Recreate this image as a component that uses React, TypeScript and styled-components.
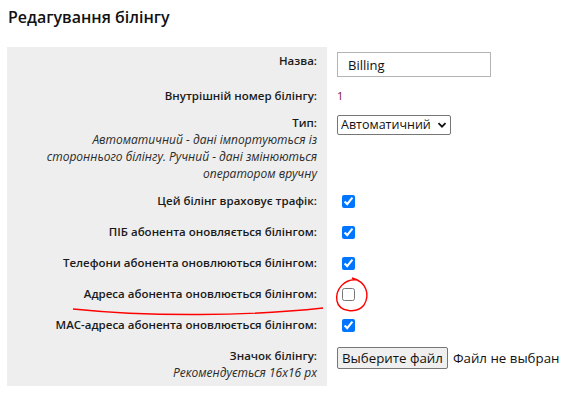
import React from 'react';
import styled, { createGlobalStyle } from 'styled-components';

const GlobalStyle = createGlobalStyle`
  body {
    margin: 0;
    background: #ffffff;
    font-family: "Open Sans", "Noto Sans", sans-serif;
    color: #1a1a1a;
  }
`;

const rows = [
  { label: 'Цей білінг враховує трафік:', checked: true },
  { label: 'ПІБ абонента оновляється білінгом:', checked: true },
  { label: 'Телефони абонента оновлюються білінгом:', checked: true },
  { label: 'Адреса абонента оновлюється білінгом:', checked: false },
  { label: 'MAC-адреса абонента оновлюється білінгом:', checked: true },
];

const App = () => {
  return (
    <Page>
      <GlobalStyle />
      <Title>Редагування білінгу</Title>
      <Table>
        <colgroup>
          <col style={{ width: 320 }} />
          <col />
        </colgroup>
        <tbody>
          <tr>
            <LabelCell>Назва:</LabelCell>
            <ValueCell>
              <TextInput defaultValue="Billing" />
            </ValueCell>
          </tr>
          <tr>
            <LabelCell>Внутрішній номер білінгу:</LabelCell>
            <ValueCell>
              <Number>1</Number>
            </ValueCell>
          </tr>
          <tr>
            <LabelCell>
              Тип:
              <Hint>
                Автоматичний - дані імпортуються із стороннього білінгу. Ручний - дані змінюються
                оператором вручну
              </Hint>
            </LabelCell>
            <ValueCell>
              <SelectBox>
                <Select defaultValue="auto">
                  <option value="auto">Автоматичний</option>
                  <option value="manual">Ручний</option>
                </Select>
                <Chevron width="10" height="10" viewBox="0 0 10 10">
                  <path d="M1.5 3.2 L5 6.7 L8.5 3.2" fill="none" stroke="#111" strokeWidth="1.8" />
                </Chevron>
              </SelectBox>
            </ValueCell>
          </tr>
          {rows.map((r) => (
            <tr key={r.label}>
              <LabelCell>{r.label}</LabelCell>
              <ValueCell>
                <Checkbox type="checkbox" defaultChecked={r.checked} />
              </ValueCell>
            </tr>
          ))}
          <tr>
            <LabelCell>
              Значок білінгу:
              <Hint>Рекомендується 16x16 px</Hint>
            </LabelCell>
            <ValueCell>
              <FilePicker>
                <FileButton type="button">Выберите файл</FileButton>
                <FileName>Файл не выбран</FileName>
              </FilePicker>
            </ValueCell>
          </tr>
        </tbody>
      </Table>
      <Marks width="570" height="395" viewBox="0 0 570 395">
        <path
          d="M358 280 C344 278 335 290 337 301 C339 312 357 314 364 305 C370 295 367 282 352 278"
          fill="none"
          stroke="#ff0000"
          strokeWidth="1.4"
        />
        <path d="M73 309 C150 317 250 316 323 308" fill="none" stroke="#ff0000" strokeWidth="1.4" />
      </Marks>
    </Page>
  );
};

export default App;

const Page = styled.div`
  position: relative;
  padding: 8px 7px;
  width: 570px;
  height: 395px;
  box-sizing: border-box;
`;

const Title = styled.h2`
  margin: 0 0 0 1px;
  font-size: 16px;
  line-height: 18px;
  font-weight: 600;
  color: #111;
`;

const Table = styled.table`
  margin-top: 21px;
  width: 556px;
  table-layout: fixed;
  border-collapse: collapse;
  border-spacing: 0;
`;

const LabelCell = styled.td`
  padding: 5px 10px;
  background: #eeeeee;
  text-align: right;
  vertical-align: top;
  font-size: 11.5px;
  line-height: 17px;
  font-weight: 600;
  color: #1a1a1a;
`;

const ValueCell = styled.td`
  padding: 5px 10px;
  vertical-align: top;
  font-size: 11.5px;
  line-height: 17px;
  white-space: nowrap;
`;

const Hint = styled.div`
  font-size: 12px;
  line-height: 17px;
  font-weight: 400;
  font-style: italic;
  color: #2a2a2a;
`;

const TextInput = styled.input`
  display: block;
  box-sizing: border-box;
  width: 154px;
  height: 25px;
  padding: 0 10px;
  border: 1px solid #b4b4b4;
  border-radius: 0;
  font-family: "Open Sans", sans-serif;
  font-size: 13px;
  color: #111;
  outline: none;
`;

const Number = styled.span`
  color: #7a1238;
  font-size: 11px;
`;

const SelectBox = styled.div`
  position: relative;
  display: inline-block;
  margin-top: 1px;
`;

const Select = styled.select`
  display: block;
  appearance: none;
  box-sizing: border-box;
  width: 114px;
  height: 20px;
  padding: 0 0 0 3px;
  border: 1px solid #767676;
  border-radius: 2px;
  background: #ffffff;
  font-family: "Open Sans", sans-serif;
  font-size: 12.5px;
  line-height: 18px;
  color: #111;
`;

const Chevron = styled.svg`
  position: absolute;
  right: 4px;
  top: 5px;
  pointer-events: none;
`;

const Checkbox = styled.input`
  display: block;
  margin: 3px 0 5px 5px;
  width: 13px;
  height: 13px;
  accent-color: #0075ff;
`;

const FilePicker = styled.div`
  display: flex;
  align-items: center;
  gap: 5px;
`;

const FileButton = styled.button`
  box-sizing: border-box;
  width: 114px;
  height: 22px;
  padding: 0 4px;
  border: 1px solid #767676;
  border-radius: 2px;
  background: #efefef;
  font-family: "Open Sans", sans-serif;
  font-size: 13.3px;
  color: #111;
`;

const FileName = styled.span`
  font-family: "Open Sans", sans-serif;
  font-size: 13.3px;
  color: #111;
  white-space: nowrap;
`;

const Marks = styled.svg`
  position: absolute;
  left: 0;
  top: 0;
  pointer-events: none;
`;
